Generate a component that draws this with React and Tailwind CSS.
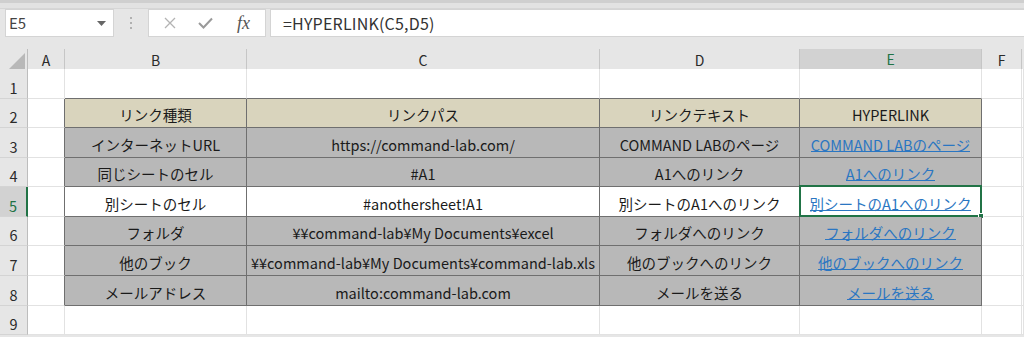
import React from "react";

const FONT = { fontFamily: '"Noto Sans CJK JP", "Noto Sans", sans-serif' };

const ROW_H = [30, 29, 30, 29, 30, 29, 30, 30, 29];

const TABLE = [
  ["リンク種類", "リンクパス", "リンクテキスト", "HYPERLINK"],
  ["インターネットURL", "https://command-lab.com/", "COMMAND LABのページ", "COMMAND LABのページ"],
  ["同じシートのセル", "#A1", "A1へのリンク", "A1へのリンク"],
  ["別シートのセル", "#anothersheet!A1", "別シートのA1へのリンク", "別シートのA1へのリンク"],
  ["フォルダ", "¥¥command-lab¥My Documents¥excel", "フォルダへのリンク", "フォルダへのリンク"],
  ["他のブック", "¥¥command-lab¥My Documents¥command-lab.xls", "他のブックへのリンク", "他のブックへのリンク"],
  ["メールアドレス", "mailto:command-lab.com", "メールを送る", "メールを送る"],
];

const rowBg = (r) => {
  if (r === 2) return "bg-[#d9d4bd]";
  if (r === 5) return "bg-white";
  return "bg-[#b8b8b8]";
};

function RowHeader({ n }) {
  const sel = n === 5;
  return (
    <div
      className={
        "flex items-end justify-center text-[14.5px] leading-[20px] border-b border-[#d4d4d4] " +
        (sel
          ? "bg-[#d2d2d2] text-[#217346] border-r-2 border-r-[#217346]"
          : "bg-[#e6e6e6] text-[#2a2a2a] border-r border-r-[#bdbdbd]")
      }
    >
      {n}
    </div>
  );
}

function Cell({ r, c }) {
  const inTable = r >= 2 && r <= 8 && c >= 1 && c <= 4;
  if (inTable) {
    const text = TABLE[r - 2][c - 1];
    const isLink = c === 4 && r >= 3;
    const sel = r === 5 && c === 4;
    return (
      <div
        className={
          "relative flex items-end justify-center pb-[5px] border-r border-b border-[#6f6f6f] text-[14.5px] whitespace-nowrap " +
          rowBg(r)
        }
      >
        <span
          className={
            "inline-block leading-[13px] border-b " +
            (isLink ? "text-[#2a76c2] border-[#2a76c2]" : "text-[#1a1a1a] border-transparent")
          }
        >
          {text}
        </span>
        {sel && (
          <div className="absolute -left-[1px] -top-[2px] -right-[1px] -bottom-[1px] border-2 border-[#217346]">
            <div className="absolute -right-[4px] -bottom-[4px] w-[6px] h-[6px] bg-[#217346] border border-white" />
          </div>
        )}
      </div>
    );
  }
  let rb = "border-r-[#e2e2e2]";
  let bb = "border-b-[#e2e2e2]";
  if (c === 0 && r >= 2 && r <= 8) rb = "border-r-[#6f6f6f]";
  if (r === 1 && c >= 1 && c <= 4) bb = "border-b-[#6f6f6f]";
  return <div className={"bg-white border-r border-b " + rb + " " + bb} />;
}

export default function App() {
  const gridCols = "grid grid-cols-[28px_37px_182px_353px_200px_182px_40px_1fr]";
  return (
    <div className="w-[1024px] h-[337px] overflow-hidden bg-[#e6e6e6]" style={FONT}>
      <div className="h-[3px] bg-[#cfcfcf]" />
      <div className="h-[6px] bg-[#e2e2e2] border-b border-[#d6d6d6]" />
      <div className="flex h-[28px] items-stretch">
        <div className="ml-[5px] w-[109px] bg-white border border-[#d4d4d4] flex items-center justify-between pl-[3px] pr-[7px]">
          <span className="text-[15px] text-[#444]">E5</span>
          <svg width="9" height="5" viewBox="0 0 9 5">
            <path d="M0 0 L9 0 L4.5 5 Z" fill="#666" />
          </svg>
        </div>
        <div className="w-[34px] flex flex-col items-center justify-center gap-[3px]">
          <div className="w-[2px] h-[2px] bg-[#b0b0b0]" />
          <div className="w-[2px] h-[2px] bg-[#b0b0b0]" />
          <div className="w-[2px] h-[2px] bg-[#b0b0b0]" />
        </div>
        <div className="w-[118px] bg-white border border-[#d4d4d4] flex items-center">
          <svg className="ml-[15px]" width="12" height="12" viewBox="0 0 12 12">
            <path d="M1 1 L11 11 M11 1 L1 11" stroke="#b3b3b3" strokeWidth="1.3" />
          </svg>
          <svg className="ml-[22px]" width="15" height="12" viewBox="0 0 15 12">
            <path d="M1 6 L5.5 10.5 L14 1.5" stroke="#9a9a9a" strokeWidth="2" fill="none" />
          </svg>
          <span
            className="ml-[24px] text-[18px] italic text-[#555] leading-none"
            style={{ fontFamily: '"Liberation Serif", serif' }}
          >
            fx
          </span>
        </div>
        <div className="ml-[4px] flex-1 bg-white border border-[#d4d4d4] border-r-0 flex items-center pl-[12px]">
          <span className="text-[16px] text-[#333] tracking-[0.2px]">=HYPERLINK(C5,D5)</span>
        </div>
      </div>
      <div className="h-[12px]" />
      <div className={gridCols + " h-[20px]"}>
        <div className="bg-[#e6e6e6] border-r border-b border-[#bdbdbd] flex items-end justify-end pr-[2px] pb-[2px]">
          <svg width="16" height="16" viewBox="0 0 16 16">
            <path d="M16 0 L16 16 L0 16 Z" fill="#b8b8b8" />
          </svg>
        </div>
        {["A", "B", "C", "D", "E", "F"].map((l) => (
          <div
            key={l}
            className={
              "flex items-center justify-center text-[14px] " +
              (l === "E"
                ? "bg-[#d2d2d2] text-[#217346] border-b-2 border-b-[#217346] border-r border-r-[#c6c6c6]"
                : "bg-[#e6e6e6] text-[#2a2a2a] border-b border-b-[#ababab] border-r border-r-[#c6c6c6]")
            }
          >
            {l}
          </div>
        ))}
        <div className="bg-[#e6e6e6] border-b border-b-[#ababab]" />
      </div>
      {ROW_H.map((h, i) => {
        const r = i + 1;
        return (
          <div key={r} className={gridCols} style={{ height: h }}>
            <RowHeader n={r} />
            {[0, 1, 2, 3, 4, 5, 6].map((c) => (
              <Cell key={c} r={r} c={c} />
            ))}
          </div>
        );
      })}
    </div>
  );
}
